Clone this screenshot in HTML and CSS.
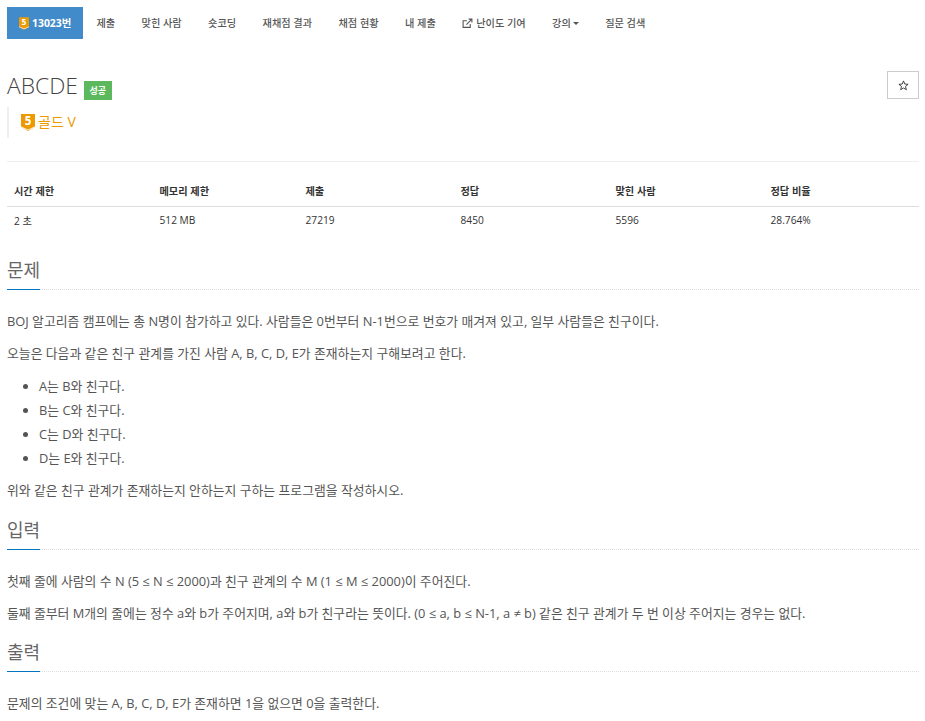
FILE: index.html
```html
<!DOCTYPE html>
<html lang="ko">
<head>
<meta charset="utf-8">
<title>ABCDE</title>
<link rel="stylesheet" href="styles.css">
</head>
<body>
<div class="page">
  <ul class="tabs">
    <li class="tab active"><svg class="tier-sm" viewBox="0 0 12 15"><path d="M0 0H12V11.5L6 15L0 11.5Z" fill="#ec9a00"/><path d="M0 11.5L6 14L12 11.5" fill="none" stroke="#fff" stroke-width=".8"/><text x="6" y="9.5" class="tier-digit" font-size="10">5</text></svg>13023번</li>
    <li class="tab">제출</li>
    <li class="tab">맞힌 사람</li>
    <li class="tab">숏코딩</li>
    <li class="tab">재채점 결과</li>
    <li class="tab">채점 현황</li>
    <li class="tab">내 제출</li>
    <li class="tab"><svg class="ext" viewBox="0 0 10 10"><path d="M7.5 5.5V8.5H1V2.5H4.5" fill="none" stroke="#555" stroke-width="1"/><path d="M4 6L8.5 1.5M6 1H9V4" fill="none" stroke="#555" stroke-width="1"/></svg>난이도 기여</li>
    <li class="tab">강의<span class="caret"></span></li>
    <li class="tab">질문 검색</li>
  </ul>

  <div class="title-row">
    <div class="title-main">
      <h1 class="title">ABCDE</h1><span class="badge">성공</span>
    </div>
    <button class="star" type="button"><svg class="star-icon" viewBox="0 0 12 12"><path d="M6 1L7.4 4.4L11 4.7L8.2 7L9.1 10.6L6 8.7L2.9 10.6L3.8 7L1 4.7L4.6 4.4Z" fill="none" stroke="#333" stroke-width="1"/></svg></button>
  </div>
  <div class="tier"><svg class="tier-lg" viewBox="0 0 14 17"><path d="M0 0H14V13L7 17L0 13Z" fill="#ec9a00"/><path d="M0 12.8L7 16L14 12.8" fill="none" stroke="#fff" stroke-width=".8"/><text x="7" y="10.5" class="tier-digit" font-size="11.5">5</text></svg>골드 V</div>
  <hr class="rule">

  <table class="stats">
    <thead>
      <tr><th class="c1">시간 제한</th><th class="c2">메모리 제한</th><th class="c3">제출</th><th class="c4">정답</th><th class="c5">맞힌 사람</th><th>정답 비율</th></tr>
    </thead>
    <tbody>
      <tr><td>2 초</td><td>512 MB</td><td>27219</td><td>8450</td><td>5596</td><td>28.764%</td></tr>
    </tbody>
  </table>

  <section class="sec first">
    <div class="head"><h2>문제</h2></div>
    <p>BOJ 알고리즘 캠프에는 총 N명이 참가하고 있다. 사람들은 0번부터 N-1번으로 번호가 매겨져 있고, 일부 사람들은 친구이다.</p>
    <p>오늘은 다음과 같은 친구 관계를 가진 사람 A, B, C, D, E가 존재하는지 구해보려고 한다.</p>
    <ul class="list">
      <li>A는 B와 친구다.</li>
      <li>B는 C와 친구다.</li>
      <li>C는 D와 친구다.</li>
      <li>D는 E와 친구다.</li>
    </ul>
    <p>위와 같은 친구 관계가 존재하는지 안하는지 구하는 프로그램을 작성하시오.</p>
  </section>
  <section class="sec">
    <div class="head"><h2>입력</h2></div>
    <p>첫째 줄에 사람의 수 N (5 ≤ N ≤ 2000)과 친구 관계의 수 M (1 ≤ M ≤ 2000)이 주어진다.</p>
    <p>둘째 줄부터 M개의 줄에는 정수 a와 b가 주어지며, a와 b가 친구라는 뜻이다. (0 ≤ a, b ≤ N-1, a ≠ b) 같은 친구 관계가 두 번 이상 주어지는 경우는 없다.</p>
  </section>
  <section class="sec">
    <div class="head"><h2>출력</h2></div>
    <p>문제의 조건에 맞는 A, B, C, D, E가 존재하면 1을 없으면 0을 출력한다.</p>
  </section>
</div>
</body>
</html>
```

FILE: styles.css
```css
* { box-sizing: border-box; }
html, body { margin: 0; padding: 0; background: #fff; }
body {
  font-family: "Open Sans", "Noto Sans CJK KR", sans-serif;
  color: #555;
  font-size: 12.85px;
  overflow: hidden;
  height: 721px;
}
.page { padding: 7px 6px 0 7px; }
.tabs { list-style: none; margin: 0; padding: 0; display: flex; height: 32px; }
.tab {
  font-size: 10.2px;
  padding: 0 13.2px;
  line-height: 32px;
  color: #555;
  white-space: nowrap;
  font-weight: 500;
}
.tab.active { background: #428bca; color: #fff; font-weight: 700; padding: 0 12px; display: flex; align-items: center; font-size: 10.4px; }
.tier-sm { width: 10px; height: 13px; margin-right: 3px; }
.tier-digit { font-family: "Open Sans", sans-serif; font-weight: 700; fill: #fff; text-anchor: middle; }
.ext { width: 11px; height: 11px; margin-right: 3px; vertical-align: -1.5px; }
.caret {
  display: inline-block; margin-left: 2px; vertical-align: 2px;
  border-top: 3px solid #555; border-left: 3px solid transparent; border-right: 3px solid transparent;
}
.title-row { display: flex; justify-content: space-between; align-items: flex-start; margin-top: 32px; height: 28px; }
.title-main { display: flex; align-items: flex-start; }
.title { margin: 0; font-size: 22.8px; line-height: 30px; font-weight: 300; color: #444; }
.badge {
  background: #5cb85c; color: #fff; font-size: 9px; font-weight: 700;
  width: 28px; height: 19px; line-height: 19px; text-align: center;
  margin: 10px 0 0 6px;
}
.star {
  width: 32px; height: 28px; padding: 0; border: 1px solid #ccc; background: #fff;
  display: flex; align-items: center; justify-content: center;
}
.star-icon { width: 11px; height: 11px; }
.tier {
  margin-top: 8px; height: 31px; border-left: 2px solid #eee; padding-left: 12px;
  display: flex; align-items: center; color: #ec9a00; font-size: 14px; font-weight: 400;
  padding-bottom: 4px;
}
.tier-lg { width: 14px; height: 17px; margin: 4px 3px 0 0; }
.rule { border: 0; border-top: 1px solid #eee; margin: 23px 0 0; }
.stats { width: 100%; border-collapse: collapse; margin-top: 14px; font-size: 10.2px; table-layout: fixed; }
.stats th { text-align: left; font-weight: 700; color: #333; height: 30px; padding: 0 7px; border-bottom: 1px solid #ddd; }
.stats td { color: #333; height: 28px; padding: 0 7px; }
.c1, .c2 { width: 146px; }
.c1 { width: 145.5px; }
.c3, .c4, .c5 { width: 155px; }
.sec h2 { margin: 0; display: inline-block; vertical-align: top; font-size: 18px; font-weight: 400; color: #666; line-height: 31px; height: 35px; border-bottom: 1px solid #0076c0; }
.head { border-bottom: 1px dotted #ddd; height: 35px; margin-bottom: 23px; }
.sec p { margin: 0 0 16px; line-height: 16px; }
.sec.first { margin-top: 21px; }
.sec { margin-top: 16.5px; }
.list { margin: -3px 0 12.4px; padding-left: 32px; }
.list li { line-height: 24px; }
```
